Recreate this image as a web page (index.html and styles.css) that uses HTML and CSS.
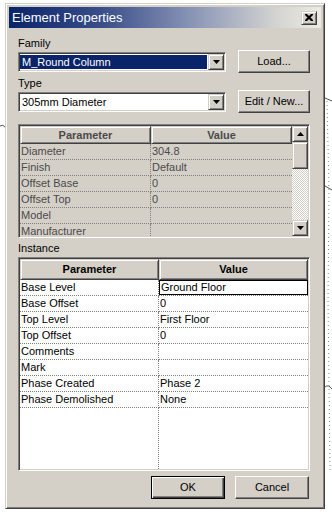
FILE: index.html
```html
<!DOCTYPE html>
<html lang="en">
<head>
  <meta charset="UTF-8">
  <title>Element Properties</title>
  <link rel="stylesheet" href="styles.css">
</head>
<body>
<svg class="sketch" width="332" height="515" viewBox="0 0 332 515">
  <path d="M0 126 Q3 124 5 127 T9 129" />
  <path d="M325 98 L332 101" />
  <path d="M325 186 L332 190" />
  <path d="M325 387 Q328 384 332 389" />
  <path class="dots" d="M327 101 L329 190 L328 300 L330 470" />
</svg>

<div class="dialog">
  <div class="titlebar">
    <span class="title">Element Properties</span>
    <span class="close raised">
      <svg width="8" height="7" viewBox="0 0 8 7"><path d="M0 0h2l2 2 2-2h2v1L5.5 3.5 8 6v1H6L4 5 2 7H0V6l2.5-2.5L0 1z"/></svg>
    </span>
  </div>

  <div class="content">
    <div class="label">Family</div>
    <div class="row">
      <div class="combo">
        <span class="combo-text selected">M_Round Column</span>
        <span class="combo-btn raised"><svg width="7" height="4" viewBox="0 0 7 4"><path d="M0 0h7L3.5 4z"/></svg></span>
      </div>
      <span class="btn">Load...</span>
    </div>

    <div class="label gap">Type</div>
    <div class="row">
      <div class="combo">
        <span class="combo-text">305mm Diameter</span>
        <span class="combo-btn raised"><svg width="7" height="4" viewBox="0 0 7 4"><path d="M0 0h7L3.5 4z"/></svg></span>
      </div>
      <span class="btn">Edit / New...</span>
    </div>

    <div class="grid type-grid">
      <div class="sheet">
        <div class="head">
          <span class="head-cell raised">Parameter</span>
          <span class="head-cell raised">Value</span>
        </div>
        <div class="line"><span class="cell">Diameter</span><span class="cell">304.8</span></div>
        <div class="line"><span class="cell">Finish</span><span class="cell">Default</span></div>
        <div class="line"><span class="cell">Offset Base</span><span class="cell">0</span></div>
        <div class="line"><span class="cell">Offset Top</span><span class="cell">0</span></div>
        <div class="line"><span class="cell">Model</span><span class="cell"></span></div>
        <div class="line"><span class="cell">Manufacturer</span><span class="cell"></span></div>
      </div>
      <div class="scrollbar">
        <span class="sb-btn raised"><svg width="7" height="4" viewBox="0 0 7 4"><path d="M0 4h7L3.5 0z"/></svg></span>
        <span class="sb-thumb raised"></span>
        <span class="sb-track"></span>
        <span class="sb-btn raised"><svg width="7" height="4" viewBox="0 0 7 4"><path d="M0 0h7L3.5 4z"/></svg></span>
      </div>
    </div>

    <div class="label gap">Instance</div>
    <div class="grid instance-grid">
      <div class="sheet">
        <div class="head">
          <span class="head-cell raised">Parameter</span>
          <span class="head-cell raised">Value</span>
        </div>
        <div class="line"><span class="cell">Base Level</span><span class="cell editing">Ground Floor</span></div>
        <div class="line"><span class="cell">Base Offset</span><span class="cell">0</span></div>
        <div class="line"><span class="cell">Top Level</span><span class="cell">First Floor</span></div>
        <div class="line"><span class="cell">Top Offset</span><span class="cell">0</span></div>
        <div class="line"><span class="cell">Comments</span><span class="cell"></span></div>
        <div class="line"><span class="cell">Mark</span><span class="cell"></span></div>
        <div class="line"><span class="cell">Phase Created</span><span class="cell">Phase 2</span></div>
        <div class="line"><span class="cell">Phase Demolished</span><span class="cell">None</span></div>
        <div class="line filler"><span class="cell"></span><span class="cell"></span></div>
      </div>
    </div>

    <div class="footer">
      <span class="btn wide default">OK</span>
      <span class="btn wide">Cancel</span>
    </div>
  </div>
</div>
</body>
</html>
```

FILE: styles.css
```css
body {
  margin: 0;
  width: 332px;
  height: 515px;
  position: relative;
  overflow: hidden;
  background: #fff;
  font: 11px/13px "Liberation Sans", Arial, sans-serif;
  color: #000;
}

/* pencil marks of the drawing behind the dialog */
.sketch {
  position: absolute;
  left: 0;
  top: 0;
}

.sketch path {
  fill: none;
  stroke: #555;
  stroke-width: 1;
}

.sketch .dots {
  stroke: #888;
  stroke-dasharray: 1 3;
}

.dialog {
  position: relative;
  margin: 3px 0 0 5px;
  width: 320px;
  height: 506px;
  box-sizing: border-box;
  padding: 2px;
  background: #d4d0c8;
  border: 1px solid;
  border-color: #d4d0c8 #404040 #404040 #d4d0c8;
  box-shadow: inset 1px 1px #fff, inset -1px -1px #808080;
}

.raised {
  box-sizing: border-box;
  background: #d4d0c8;
  border: 1px solid;
  border-color: #d4d0c8 #404040 #404040 #d4d0c8;
  box-shadow: inset 1px 1px #fff, inset -1px -1px #808080;
}

.titlebar {
  height: 21px;
  display: flex;
  align-items: center;
  justify-content: space-between;
  padding: 0 4px 0 3px;
  margin: 1px 1px 0 1px;
  background: linear-gradient(90deg, #0a246a 0%, #3a4f8a 30%, #8d98b8 60%, #d2d2d0 85%, #ecebe4 100%);
}

.title {
  color: #fff;
  font-size: 13px;
  line-height: 16px;
}

.close {
  width: 16px;
  height: 14px;
  display: flex;
  align-items: center;
  justify-content: center;
}

.content {
  padding: 8px 12px 0 10px;
}

.label {
  height: 14px;
  line-height: 14px;
}

.label.gap {
  margin-top: 3px;
}

.row {
  height: 23px;
  display: flex;
  align-items: center;
  justify-content: space-between;
}

.combo {
  width: 208px;
  height: 20px;
  box-sizing: border-box;
  display: flex;
  background: #fff;
  border: 1px solid;
  border-color: #808080 #fff #fff #808080;
  box-shadow: inset 1px 1px #404040, inset -1px -1px #d4d0c8;
  padding: 1px;
}

.combo-text {
  flex: 1;
  padding-left: 2px;
  line-height: 16px;
}

.combo-text.selected {
  margin: 1px 1px 1px 0;
  line-height: 14px;
  background: #0a246a;
  color: #fff;
}

.combo-btn {
  width: 16px;
  height: 16px;
  display: flex;
  align-items: center;
  justify-content: center;
}

.btn {
  width: 72px;
  height: 23px;
  box-sizing: border-box;
  display: flex;
  align-items: center;
  justify-content: center;
  background: #d4d0c8;
  border: 1px solid;
  border-color: #fff #404040 #404040 #fff;
  box-shadow: inset -1px -1px #808080;
}

.btn.wide {
  width: 74px;
}

.btn.default {
  border-color: #000;
  box-shadow: inset 1px 1px #fff, inset -1px -1px #404040, inset -2px -2px #808080;
}

.grid {
  box-sizing: border-box;
  display: flex;
  border: 1px solid;
  border-color: #808080 #fff #fff #808080;
  box-shadow: inset 1px 1px #404040, inset -1px -1px #d4d0c8;
  padding: 1px;
}

.type-grid {
  height: 114px;
  margin-top: 11px;
  background: #d4d0c8;
  color: #4a4a4a;
}

.instance-grid {
  height: 214px;
  margin-top: 2px;
  background: #fff;
}

.sheet {
  flex: 1;
  display: flex;
  flex-direction: column;
  overflow: hidden;
}

.head,
.line {
  display: grid;
  grid-template-columns: 131px 1fr;
  flex: none;
}

.instance-grid .head,
.instance-grid .line {
  grid-template-columns: 139px 1fr;
}

.head {
  height: 18px;
}

.instance-grid .head {
  height: 21px;
}

.head-cell {
  display: flex;
  align-items: center;
  justify-content: center;
  font-weight: bold;
}

.line {
  height: 16px;
}

.cell {
  box-sizing: border-box;
  padding-left: 1px;
  line-height: 15px;
  white-space: nowrap;
  overflow: hidden;
  border-bottom: 1px dotted #808080;
}

.cell:first-child {
  border-right: 1px dotted #808080;
}

.cell.editing {
  box-shadow: inset 0 0 0 1px #000;
  padding-left: 2px;
}

.line.filler {
  flex: 1;
}

.filler .cell {
  border-bottom: 0;
}

.scrollbar {
  width: 16px;
  display: flex;
  flex-direction: column;
}

.sb-btn {
  height: 16px;
  display: flex;
  align-items: center;
  justify-content: center;
  flex: none;
}

.sb-thumb {
  height: 27px;
  flex: none;
}

.sb-track {
  flex: 1;
  background: repeating-conic-gradient(#d4d0c8 0 25%, #fff 0 50%) 0 0 / 2px 2px;
}

.footer {
  display: flex;
  justify-content: flex-end;
  gap: 10px;
  margin-top: 5px;
  padding-right: 1px;
}
```
